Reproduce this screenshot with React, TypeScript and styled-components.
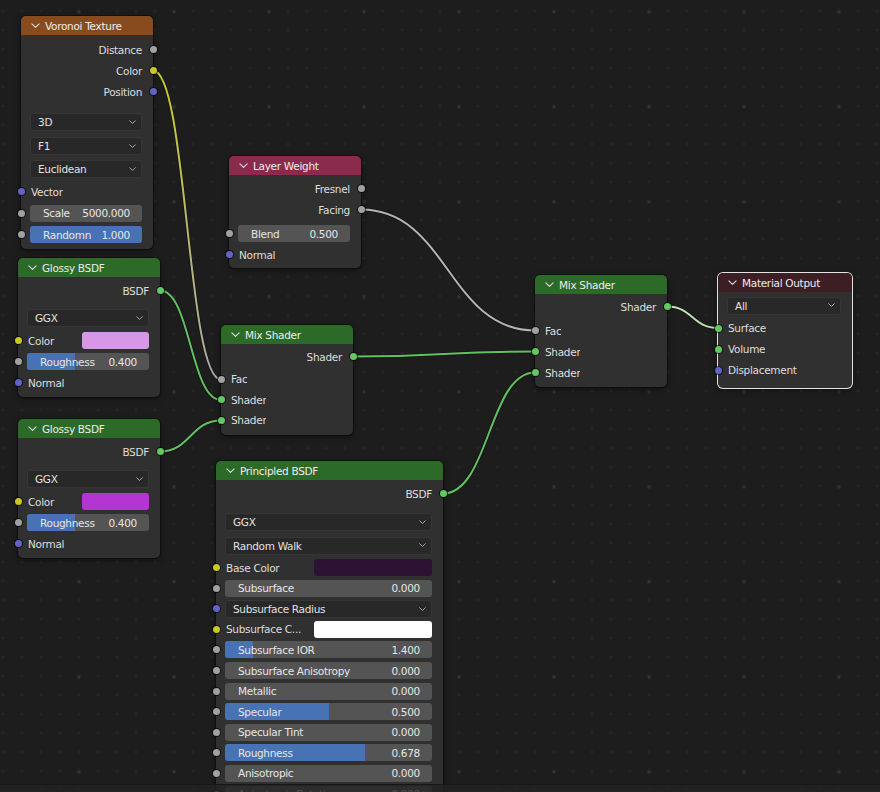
import React, {ReactNode} from 'react';
import styled, {createGlobalStyle} from 'styled-components';

const SOCKET = {
    gray: '#a1a1a1',
    yellow: '#c7c729',
    purple: '#6363c7',
    green: '#63c763',
};

type SocketColor = keyof typeof SOCKET;

type Wire = {
    x1: number;
    y1: number;
    x2: number;
    y2: number;
    from: string;
    to: string;
};

const wires: Wire[] = [
    {x1: 153, y1: 70.5, x2: 221, y2: 379.5, from: '#c9c930', to: '#a8a8a8'},
    {x1: 160, y1: 290.5, x2: 221, y2: 400, from: '#62c060', to: '#62c060'},
    {x1: 160, y1: 451.5, x2: 221, y2: 420.5, from: '#62c060', to: '#62c060'},
    {x1: 361, y1: 209.5, x2: 535, y2: 330.5, from: '#b4b4b4', to: '#b4b4b4'},
    {x1: 353, y1: 356.5, x2: 535, y2: 351.5, from: '#62c060', to: '#62c060'},
    {x1: 443, y1: 493.5, x2: 535, y2: 372.5, from: '#62c060', to: '#62c060'},
    {x1: 667, y1: 306.5, x2: 718, y2: 328, from: '#c4e4b4', to: '#b8e0a6'},
];

const wirePath = (w: Wire) => {
    const d = Math.max(Math.abs(w.x2 - w.x1) * 0.5, 18);
    return `M ${w.x1} ${w.y1} C ${w.x1 + d} ${w.y1}, ${w.x2 - d} ${w.y2}, ${w.x2} ${w.y2}`;
};

const GlobalStyle = createGlobalStyle`
  html, body {
    margin: 0;
    padding: 0;
    background: #1d1d1d;
  }
  body {
    font-family: "DejaVu Sans", "Liberation Sans", sans-serif;
    font-size: 10.5px;
    letter-spacing: -0.3px;
    color: #dedede;
  }
`;

const Canvas = styled.div`
  position: relative;
  width: 880px;
  height: 792px;
  overflow: hidden;
  background-color: #1d1d1d;
  background-image: radial-gradient(circle, #343434 1.3px, transparent 1.8px),
  radial-gradient(circle, #2a2a2a 0.9px, transparent 1.3px);
  background-size: 95px 95px, 19px 19px;
  background-position: 31.5px -35.5px, -6.5px 1.5px;
`;

const WireLayer = styled.svg`
  position: absolute;
  left: 0;
  top: 0;
`;

const NodeBox = styled.div<{ $x: number; $y: number; $w: number; $selected?: boolean }>`
  position: absolute;
  left: ${p => p.$x}px;
  top: ${p => p.$y}px;
  width: ${p => p.$w}px;
  background: #303030;
  border-radius: 5px;
  box-shadow: ${p => p.$selected
          ? '0 0 0 1px #e2e2e2, 0 2px 6px rgba(0,0,0,.5)'
          : '0 0 0 1px rgba(0,0,0,.35), 0 2px 6px rgba(0,0,0,.45)'};
`;

const Header = styled.div<{ $color: string }>`
  height: 19px;
  display: flex;
  align-items: center;
  gap: 5px;
  padding-left: 10px;
  background: ${p => p.$color};
  border-radius: 5px 5px 0 0;
  color: #ececec;
  white-space: nowrap;
`;

const Body = styled.div<{ $pt: number; $pb: number }>`
  padding: ${p => p.$pt}px 11px ${p => p.$pb}px 9px;
`;

const Spacer = styled.div<{ $h: number }>`
  height: ${p => p.$h}px;
`;

const Row = styled.div<{ $h: number; $out?: boolean }>`
  position: relative;
  height: ${p => p.$h}px;
  display: flex;
  align-items: center;
  justify-content: ${p => p.$out ? 'flex-end' : 'flex-start'};
  white-space: nowrap;
`;

const Socket = styled.span<{ $color: string; $out?: boolean }>`
  position: absolute;
  top: 50%;
  ${p => p.$out ? 'right: -14.5px;' : 'left: -12.5px;'}
  width: 7px;
  height: 7px;
  margin-top: -3.5px;
  border-radius: 50%;
  background: ${p => p.$color};
  box-shadow: 0 0 0 1px rgba(0, 0, 0, .6);
`;

const Label = styled.span<{ $w?: number }>`
  padding-left: 1px;
  flex: ${p => p.$w ? `0 0 ${p.$w}px` : '0 1 auto'};
  overflow: hidden;
`;

const Dropdown = styled.div`
  flex: 1;
  height: 18px;
  box-sizing: border-box;
  display: flex;
  align-items: center;
  justify-content: space-between;
  padding: 0 5px 0 7px;
  background: #282828;
  border: 1px solid #363636;
  border-radius: 3px;
  color: #e2e2e2;
`;

const Slider = styled.div`
  position: relative;
  flex: 1;
  height: 17px;
  box-sizing: border-box;
  display: flex;
  align-items: center;
  justify-content: space-between;
  padding: 0 12px 0 13px;
  background: #545454;
  border-radius: 3px;
  overflow: hidden;
  color: #e6e6e6;
`;

const SliderFill = styled.div`
  position: absolute;
  left: 0;
  top: 0;
  bottom: 0;
  background: #4772b3;
`;

const SliderText = styled.span`
  position: relative;
`;

const Swatch = styled.div<{ $color: string }>`
  flex: 1;
  height: 17px;
  background: ${p => p.$color};
  border-radius: 3px;
`;

const Footer = styled.div`
  position: absolute;
  left: 0;
  right: 0;
  bottom: 0;
  height: 7px;
  background: rgba(34, 34, 34, .78);
  border-top: 1px solid #171717;
`;

const Chevron = ({size = 9, color = '#dcdcdc'}: { size?: number; color?: string }) => (
    <svg width={size} height={size * 0.6} viewBox="0 0 10 6">
        <polyline points="1,1 5,5 9,1" fill="none" stroke={color} strokeWidth="1.2"
                  strokeLinecap="round" strokeLinejoin="round"/>
    </svg>
);

type NodeProps = {
    x: number;
    y: number;
    w: number;
    title: string;
    color: string;
    pt?: number;
    pb?: number;
    selected?: boolean;
    children: ReactNode;
};

const Node = (props: NodeProps) => (
    <NodeBox $x={props.x} $y={props.y} $w={props.w} $selected={props.selected}>
        <Header $color={props.color}>
            <Chevron/>
            <span>{props.title}</span>
        </Header>
        <Body $pt={props.pt ?? 3} $pb={props.pb ?? 3}>
            {props.children}
        </Body>
    </NodeBox>
);

const Out = ({label, socket, h = 21}: { label: string; socket: SocketColor; h?: number }) => (
    <Row $h={h} $out>
        <span>{label}</span>
        <Socket $color={SOCKET[socket]} $out/>
    </Row>
);

const In = ({label, socket, h = 21}: { label: string; socket: SocketColor; h?: number }) => (
    <Row $h={h}>
        <Socket $color={SOCKET[socket]}/>
        <Label>{label}</Label>
    </Row>
);

const Drop = ({value, socket, h = 24}: { value: string; socket?: SocketColor; h?: number }) => (
    <Row $h={h}>
        {socket && <Socket $color={SOCKET[socket]}/>}
        <Dropdown>
            <span>{value}</span>
            <Chevron size={7} color="#bdbdbd"/>
        </Dropdown>
    </Row>
);

type FieldProps = {
    label: string;
    value: string;
    fill?: number;
    socket?: SocketColor;
    h?: number;
};

const Field = ({label, value, fill = 0, socket = 'gray', h = 21}: FieldProps) => (
    <Row $h={h}>
        <Socket $color={SOCKET[socket]}/>
        <Slider>
            {fill > 0 && <SliderFill style={{width: `${fill * 100}%`}}/>}
            <SliderText>{label}</SliderText>
            <SliderText>{value}</SliderText>
        </Slider>
    </Row>
);

const ColorIn = ({label, color, labelW, h = 21}: { label: string; color: string; labelW: number; h?: number }) => (
    <Row $h={h}>
        <Socket $color={SOCKET.yellow}/>
        <Label $w={labelW}>{label}</Label>
        <Swatch $color={color}/>
    </Row>
);

const Glossy = ({y, color}: { y: number; color: string }) => (
    <Node x={18} y={y} w={142} title="Glossy BSDF" color="#2c6a28" pt={3} pb={4}>
        <Out label="BSDF" socket="green"/>
        <Spacer $h={5}/>
        <Drop value="GGX"/>
        <ColorIn label="Color" color={color} labelW={54}/>
        <Field label="Roughness" value="0.400" fill={0.39}/>
        <In label="Normal" socket="purple"/>
    </Node>
);

const P = 20.6;

const App = () => {
    return (
        <Canvas>
            <GlobalStyle/>
            <WireLayer width={880} height={792}>
                <defs>
                    {wires.map((w, i) => (
                        <linearGradient key={i} id={`wire${i}`} gradientUnits="userSpaceOnUse"
                                        x1={w.x1} y1={w.y1} x2={w.x2} y2={w.y2}>
                            <stop offset="0" stopColor={w.from}/>
                            <stop offset="1" stopColor={w.to}/>
                        </linearGradient>
                    ))}
                </defs>
                {wires.map((w, i) => (
                    <g key={i} fill="none">
                        <path d={wirePath(w)} stroke="rgba(0,0,0,0.35)" strokeWidth={3.6}/>
                        <path d={wirePath(w)} stroke={`url(#wire${i})`} strokeWidth={2}/>
                    </g>
                ))}
            </WireLayer>

            <Node x={21} y={16} w={132} title="Voronoi Texture" color="#874b1e" pt={4} pb={3}>
                <Out label="Distance" socket="gray"/>
                <Out label="Color" socket="yellow"/>
                <Out label="Position" socket="purple"/>
                <Spacer $h={8.5}/>
                <Drop value="3D" h={23.5}/>
                <Drop value="F1" h={23.5}/>
                <Drop value="Euclidean" h={23.5}/>
                <In label="Vector" socket="purple" h={21.5}/>
                <Field label="Scale" value="5000.000" h={21.5}/>
                <Field label="Randomn" value="1.000" fill={1} h={21.5}/>
            </Node>

            <Glossy y={258} color="#d597e6"/>
            <Glossy y={419} color="#b535d2"/>

            <Node x={229} y={156} w={132} title="Layer Weight" color="#8a2b4d" pt={3} pb={3}>
                <Out label="Fresnel" socket="gray"/>
                <Out label="Facing" socket="gray"/>
                <Spacer $h={3}/>
                <Field label="Blend" value="0.500"/>
                <In label="Normal" socket="purple"/>
            </Node>

            <Node x={221} y={325} w={132} title="Mix Shader" color="#2c6a28" pt={2} pb={4.5}>
                <Out label="Shader" socket="green"/>
                <Spacer $h={2}/>
                <In label="Fac" socket="gray" h={20.5}/>
                <In label="Shader" socket="green" h={20.5}/>
                <In label="Shader" socket="green" h={20.5}/>
            </Node>

            <Node x={535} y={275} w={132} title="Mix Shader" color="#2c6a28" pt={2} pb={4}>
                <Out label="Shader" socket="green"/>
                <Spacer $h={3}/>
                <In label="Fac" socket="gray"/>
                <In label="Shader" socket="green"/>
                <In label="Shader" socket="green"/>
            </Node>

            <Node x={718} y={273} w={134} title="Material Output" color="#3e1e25" pt={1.5} pb={7} selected>
                <Drop value="All"/>
                <In label="Surface" socket="green"/>
                <In label="Volume" socket="green"/>
                <In label="Displacement" socket="purple"/>
            </Node>

            <Node x={216} y={461} w={227} title="Principled BSDF" color="#2c6a28" pt={3} pb={4}>
                <Out label="BSDF" socket="green"/>
                <Spacer $h={6.25}/>
                <Drop value="GGX" h={23.5}/>
                <Drop value="Random Walk" h={23.5}/>
                <ColorIn label="Base Color" color="#2e1233" labelW={88} h={P}/>
                <Field label="Subsurface" value="0.000" h={P}/>
                <Drop value="Subsurface Radius" socket="purple" h={P}/>
                <ColorIn label="Subsurface C..." color="#ffffff" labelW={88} h={P}/>
                <Field label="Subsurface IOR" value="1.400" fill={0.133} h={P}/>
                <Field label="Subsurface Anisotropy" value="0.000" h={P}/>
                <Field label="Metallic" value="0.000" h={P}/>
                <Field label="Specular" value="0.500" fill={0.5} h={P}/>
                <Field label="Specular Tint" value="0.000" h={P}/>
                <Field label="Roughness" value="0.678" fill={0.678} h={P}/>
                <Field label="Anisotropic" value="0.000" h={P}/>
                <Field label="Anisotropic Rotation" value="0.000" h={P}/>
                <Field label="Sheen" value="0.000" h={P}/>
            </Node>

            <Footer/>
        </Canvas>
    );
};

export default App;
